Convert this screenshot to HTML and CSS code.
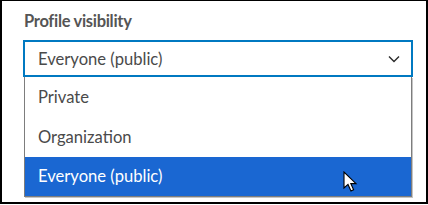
FILE: index.html
```html
<!DOCTYPE html>
<html lang="en">
<head>
    <meta charset="UTF-8">
    <meta name="viewport" content="width=device-width, initial-scale=1.0">
    <title>Profile visibility</title>
    <link rel="stylesheet" href="styles.css">
</head>
<body>

    <div class="frame">
        <label class="field-label">Profile visibility</label>

        <div class="select">
            <span class="select-value">Everyone (public)</span>
            <svg class="chevron" width="12" height="8" viewBox="0 0 12 8">
                <path d="M1 1.5 L6 6.5 L11 1.5" fill="none" stroke="#2b2b2b" stroke-width="1.4"/>
            </svg>
        </div>

        <ul class="options">
            <li class="option">Private</li>
            <li class="option">Organization</li>
            <li class="option selected">Everyone (public)</li>
        </ul>

        <!-- mouse pointer over the selected row -->
        <svg class="cursor" width="16" height="22" viewBox="0 0 16 22">
            <path d="M1 1 L1 17 L5 13.4 L8 20 L10.6 18.8 L7.8 12.6 L13 12.6 Z" fill="#fff" stroke="#000" stroke-width="1.1" stroke-linejoin="miter"/>
        </svg>
    </div>

</body>
</html>
```

FILE: styles.css
```css
* { box-sizing: border-box; }
body { margin: 0; font-family: Lato, "Open Sans", sans-serif; background-color: #fff; }
.frame { position: relative; width: 428px; height: 204px; border: 2px solid #000; border-top-width: 1px; padding: 9px 13px 0 21px; }
.field-label { display: block; font-size: 16.5px; font-weight: bold; letter-spacing: -0.3px; color: #555; line-height: 22px; margin-left: 1px; }
.select { display: flex; align-items: center; justify-content: space-between; height: 37px; margin-top: 8px; padding: 0 11px 0 13px; border: 2px solid #0079c1; background-color: #fff; }
.select-value { font-size: 16.6px; color: #4a4a4a; }
.chevron { display: block; }
.options { list-style: none; margin: 0 1px 0 1px; padding: 0; border: 1px solid #7d7d7d; border-top: none; box-shadow: 1px 1px 0 #c4c4c4; }
.option { height: 40px; line-height: 40px; padding-left: 13px; font-size: 16.6px; color: #4a4a4a; }
.option.selected { background-color: #1a67d2; color: #fff; height: 39px; line-height: 39px; }
.cursor { position: absolute; left: 341px; top: 170px; }
```
